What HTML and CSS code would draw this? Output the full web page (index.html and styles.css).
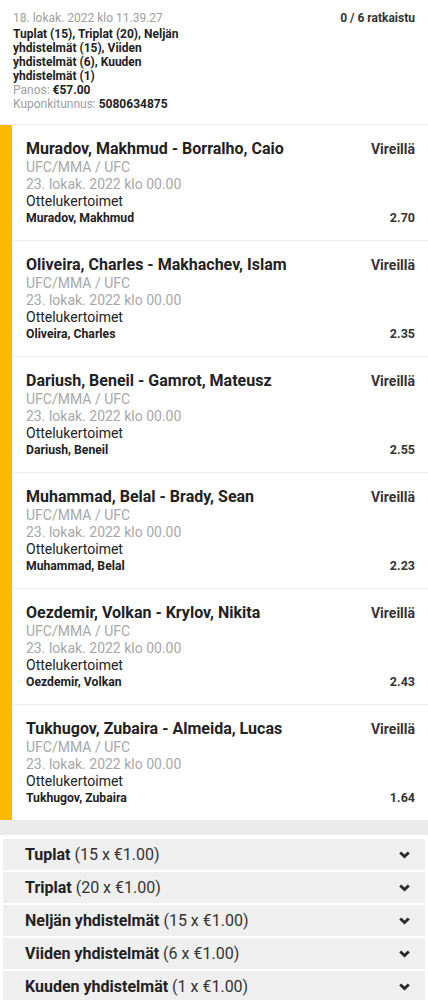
FILE: index.html
```html
<!DOCTYPE html>
<html lang="fi">
<head>
<meta charset="utf-8">
<title>Kuponki</title>
<link rel="stylesheet" href="styles.css">
</head>
<body>
<div class="page">
  <header class="summary">
    <div class="summary-main">
      <div class="summary-date">18. lokak. 2022 klo 11.39.27</div>
      <div class="summary-types">Tuplat (15), Triplat (20), Neljän yhdistelmät (15), Viiden yhdistelmät (6), Kuuden yhdistelmät (1)</div>
      <div class="summary-line">Panos: <b>€57.00</b></div>
      <div class="summary-line">Kuponkitunnus: <b>5080634875</b></div>
    </div>
    <div class="summary-status">0 / 6 ratkaistu</div>
  </header>

  <section class="events">
    <article class="event">
      <div class="event-row"><span class="event-title">Muradov, Makhmud - Borralho, Caio</span><span class="event-state">Vireillä</span></div>
      <div class="event-meta">UFC/MMA / UFC</div>
      <div class="event-meta">23. lokak. 2022 klo 00.00</div>
      <div class="event-market">Ottelukertoimet</div>
      <div class="event-row"><span class="event-pick">Muradov, Makhmud</span><span class="event-odds">2.70</span></div>
    </article>
    <article class="event">
      <div class="event-row"><span class="event-title">Oliveira, Charles - Makhachev, Islam</span><span class="event-state">Vireillä</span></div>
      <div class="event-meta">UFC/MMA / UFC</div>
      <div class="event-meta">23. lokak. 2022 klo 00.00</div>
      <div class="event-market">Ottelukertoimet</div>
      <div class="event-row"><span class="event-pick">Oliveira, Charles</span><span class="event-odds">2.35</span></div>
    </article>
    <article class="event">
      <div class="event-row"><span class="event-title">Dariush, Beneil - Gamrot, Mateusz</span><span class="event-state">Vireillä</span></div>
      <div class="event-meta">UFC/MMA / UFC</div>
      <div class="event-meta">23. lokak. 2022 klo 00.00</div>
      <div class="event-market">Ottelukertoimet</div>
      <div class="event-row"><span class="event-pick">Dariush, Beneil</span><span class="event-odds">2.55</span></div>
    </article>
    <article class="event">
      <div class="event-row"><span class="event-title">Muhammad, Belal - Brady, Sean</span><span class="event-state">Vireillä</span></div>
      <div class="event-meta">UFC/MMA / UFC</div>
      <div class="event-meta">23. lokak. 2022 klo 00.00</div>
      <div class="event-market">Ottelukertoimet</div>
      <div class="event-row"><span class="event-pick">Muhammad, Belal</span><span class="event-odds">2.23</span></div>
    </article>
    <article class="event">
      <div class="event-row"><span class="event-title">Oezdemir, Volkan - Krylov, Nikita</span><span class="event-state">Vireillä</span></div>
      <div class="event-meta">UFC/MMA / UFC</div>
      <div class="event-meta">23. lokak. 2022 klo 00.00</div>
      <div class="event-market">Ottelukertoimet</div>
      <div class="event-row"><span class="event-pick">Oezdemir, Volkan</span><span class="event-odds">2.43</span></div>
    </article>
    <article class="event">
      <div class="event-row"><span class="event-title">Tukhugov, Zubaira - Almeida, Lucas</span><span class="event-state">Vireillä</span></div>
      <div class="event-meta">UFC/MMA / UFC</div>
      <div class="event-meta">23. lokak. 2022 klo 00.00</div>
      <div class="event-market">Ottelukertoimet</div>
      <div class="event-row"><span class="event-pick">Tukhugov, Zubaira</span><span class="event-odds">1.64</span></div>
    </article>
  </section>

  <div class="divider-band"></div>

  <section class="systems">
    <div class="system"><span><b>Tuplat</b> (15 x €1.00)</span><svg class="chev" viewBox="0 0 11 8"><path d="M1.2 1.4 L5.5 5.6 L9.8 1.4" fill="none" stroke="#2a2a2a" stroke-width="2.8"/></svg></div>
    <div class="system"><span><b>Triplat</b> (20 x €1.00)</span><svg class="chev" viewBox="0 0 11 8"><path d="M1.2 1.4 L5.5 5.6 L9.8 1.4" fill="none" stroke="#2a2a2a" stroke-width="2.8"/></svg></div>
    <div class="system"><span><b>Neljän yhdistelmät</b> (15 x €1.00)</span><svg class="chev" viewBox="0 0 11 8"><path d="M1.2 1.4 L5.5 5.6 L9.8 1.4" fill="none" stroke="#2a2a2a" stroke-width="2.8"/></svg></div>
    <div class="system"><span><b>Viiden yhdistelmät</b> (6 x €1.00)</span><svg class="chev" viewBox="0 0 11 8"><path d="M1.2 1.4 L5.5 5.6 L9.8 1.4" fill="none" stroke="#2a2a2a" stroke-width="2.8"/></svg></div>
    <div class="system"><span><b>Kuuden yhdistelmät</b> (1 x €1.00)</span><svg class="chev" viewBox="0 0 11 8"><path d="M1.2 1.4 L5.5 5.6 L9.8 1.4" fill="none" stroke="#2a2a2a" stroke-width="2.8"/></svg></div>
  </section>
</div>
</body>
</html>
```

FILE: styles.css
```css
* { box-sizing: border-box; }
html, body { margin: 0; padding: 0; background: #fff; }
body {
  font-family: Roboto, "Liberation Sans", Arial, sans-serif;
  color: #222;
}
.page { width: 428px; }

.summary {
  display: flex;
  justify-content: space-between;
  align-items: flex-start;
  height: 125px;
  padding: 11px 13px 0 13px;
  border-bottom: 1px solid #ececec;
  font-size: 12px;
  line-height: 14px;
}
.summary-main { width: 182px; }
.summary-date { color: #a0a0a0; margin-bottom: 2px; }
.summary-types { font-weight: 700; color: #222; }
.summary-line { color: #a0a0a0; }
.summary-line b { color: #222; font-weight: 700; }
.summary-status { font-weight: 700; color: #333; }

.events { border-left: 12px solid #fbb900; }
.event {
  padding: 14px 13px 13px 14px;
  border-bottom: 1px solid #eeeeee;
  height: 116px;
}
.event:last-child { border-bottom: none; height: 115px; }
.event-row { display: flex; justify-content: space-between; align-items: baseline; }
.event-title { font-size: 16px; font-weight: 700; line-height: 20px; color: #222; }
.event-state { font-size: 14px; font-weight: 700; color: #333; }
.event-meta { font-size: 14px; line-height: 17px; color: #a8a8a8; }
.event-market { font-size: 14px; line-height: 17px; color: #222; }
.event-pick { font-size: 12.2px; font-weight: 700; line-height: 15px; color: #222; }
.event-odds { font-size: 12.5px; font-weight: 700; color: #333; }

.divider-band { height: 15px; background: #ebebeb; }

.systems {
  display: flex;
  flex-direction: column;
  padding: 4px 3px 0 3px;
}
.system {
  display: flex;
  justify-content: space-between;
  align-items: center;
  height: 33px;
  padding: 0 15px 0 22px;
  background: #efefef;
  border-bottom: 2px solid #fff;
  font-size: 16px;
  color: #333;
}
.system b { font-weight: 700; color: #222; }
.chev { width: 11px; height: 8px; display: block; }
```
